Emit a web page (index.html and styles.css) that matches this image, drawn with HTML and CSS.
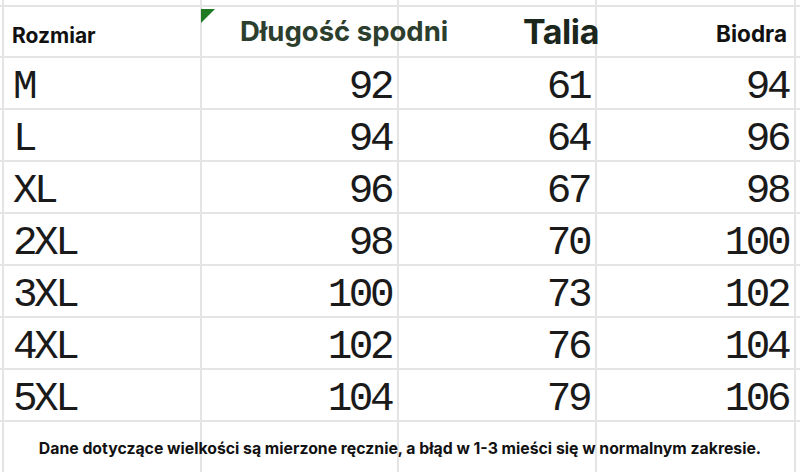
FILE: index.html
```html
<!DOCTYPE html>
<html lang="pl">
<head>
<meta charset="utf-8">
<title>Tabela rozmiarów</title>
<link rel="stylesheet" href="styles.css">
</head>
<body>
<div class="sheet">
  <div class="c"></div><div class="c"></div><div class="c"></div><div class="c"></div><div class="c"></div><div class="c"></div>

  <div class="c"></div>
  <div class="c h h-size">Rozmiar</div>
  <div class="c h h-len"><span class="flag"></span><span class="over">Długość spodni</span></div>
  <div class="c h h-waist"><span class="over">Talia</span></div>
  <div class="c h h-hip">Biodra</div>
  <div class="c"></div>

  <div class="c"></div><div class="c lab">M</div><div class="c num">92</div><div class="c num">61</div><div class="c num">94</div><div class="c"></div>
  <div class="c"></div><div class="c lab">L</div><div class="c num">94</div><div class="c num">64</div><div class="c num">96</div><div class="c"></div>
  <div class="c"></div><div class="c lab">XL</div><div class="c num">96</div><div class="c num">67</div><div class="c num">98</div><div class="c"></div>
  <div class="c"></div><div class="c lab">2XL</div><div class="c num">98</div><div class="c num">70</div><div class="c num">100</div><div class="c"></div>
  <div class="c"></div><div class="c lab">3XL</div><div class="c num">100</div><div class="c num">73</div><div class="c num">102</div><div class="c"></div>
  <div class="c"></div><div class="c lab">4XL</div><div class="c num">102</div><div class="c num">76</div><div class="c num">104</div><div class="c"></div>
  <div class="c"></div><div class="c lab">5XL</div><div class="c num">104</div><div class="c num">79</div><div class="c num">106</div><div class="c"></div>

  <div class="c f f1"></div><div class="c f f2"></div><div class="c f f3"></div><div class="c f f4"></div><div class="c f f5"></div><div class="c f f6"></div>
  <div class="note">Dane dotyczące wielkości są mierzone ręcznie, a błąd w 1-3 mieści się w normalnym zakresie.</div>
</div>
</body>
</html>
```
FILE: styles.css
```css
html, body {
  margin: 0;
  padding: 0;
  background: #ffffff;
}
body {
  width: 800px;
  height: 472px;
  overflow: hidden;
}
.sheet {
  display: grid;
  grid-template-columns: 2px 196px 195px 196px 197px 4px;
  grid-template-rows: 5px 49px repeat(7, 50px) 60px;
  gap: 2px;
  background: #e4e4e4;
  width: 800px;
  height: 472px;
  overflow: hidden;
}
.c {
  background: #ffffff;
  min-width: 0;
  display: flex;
  align-items: center;
  white-space: nowrap;
}
.h {
  font-family: "Inter", "Liberation Sans", sans-serif;
  font-weight: 700;
  color: #111111;
}
.h-size {
  font-size: 21px;
  padding: 8px 0 0 8px;
}
.h-len {
  position: relative;
  justify-content: flex-start;
  font-size: 27.5px;
  color: #2c3e2d;
  padding: 0 0 2px 38px;
}
.flag {
  position: absolute;
  left: -1px;
  top: 2px;
  width: 0;
  height: 0;
  border-top: 14px solid #1f7a23;
  border-right: 14px solid transparent;
}
.h-waist {
  justify-content: flex-end;
  font-size: 34px;
  color: #1b261c;
}
.over {
  position: relative;
  z-index: 1;
}
.h-waist .over {
  margin-right: -4px;
  letter-spacing: -0.4px;
}
.h-hip {
  justify-content: flex-end;
  font-size: 22.5px;
  padding: 4px 7px 0 0;
}
.lab, .num {
  font-family: "Liberation Mono", "Courier New", monospace;
  font-size: 41px;
  letter-spacing: -3.5px;
  color: #1a1a1a;
  padding-top: 8px;
}
.lab {
  padding-left: 9px;
}
.num {
  justify-content: flex-end;
  padding-right: 6px;
}
.f { grid-row: 10; }
.f1 { grid-column: 1; }
.f2 { grid-column: 2; }
.f3 { grid-column: 3; }
.f4 { grid-column: 4; }
.f5 { grid-column: 5; }
.f6 { grid-column: 6; }
.note {
  grid-row: 10;
  grid-column: 1 / -1;
  align-self: center;
  justify-self: center;
  font-family: "Inter", "Liberation Sans", sans-serif;
  font-weight: 700;
  font-size: 15.8px;
  color: #111111;
  margin-top: -7px;
  white-space: nowrap;
}
```
